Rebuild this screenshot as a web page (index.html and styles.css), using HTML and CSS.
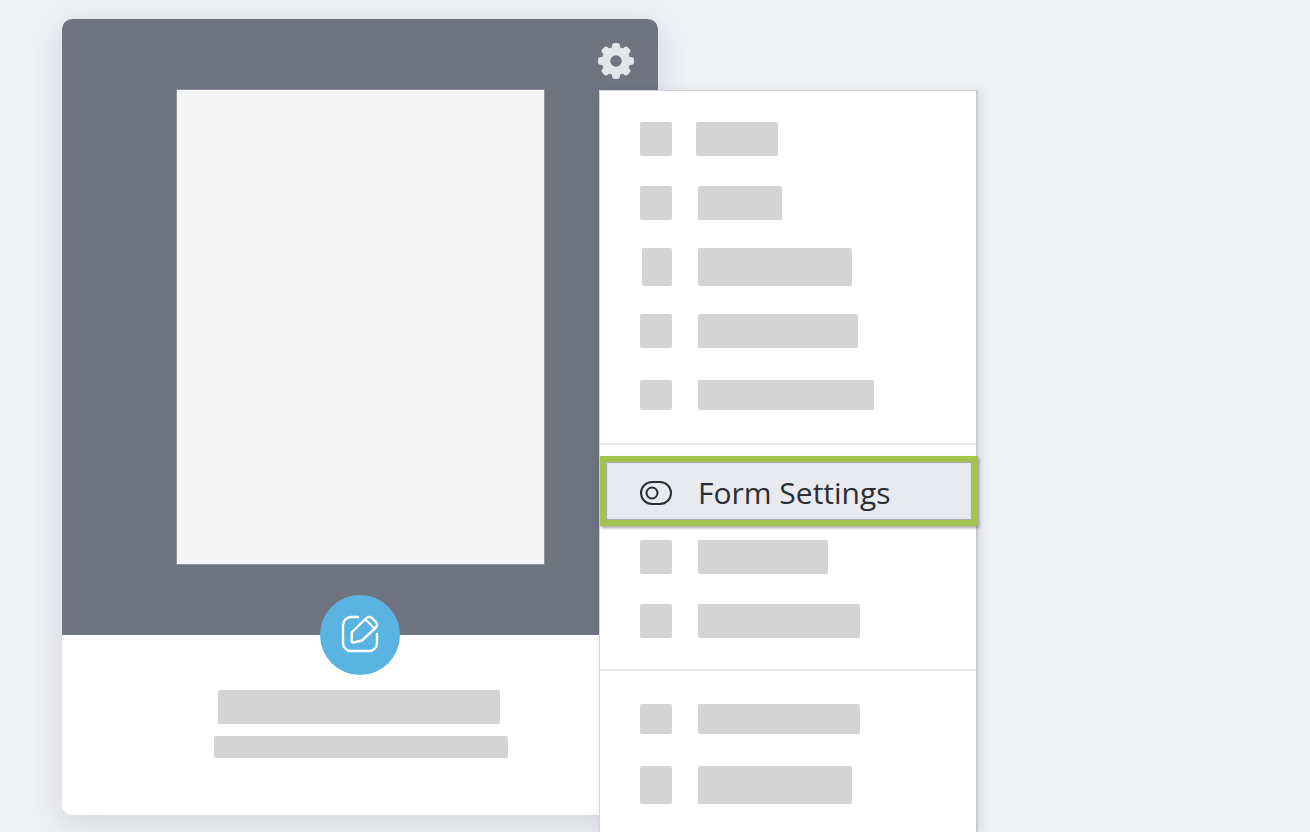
FILE: index.html
```html
<!DOCTYPE html>
<html lang="en">
<head>
  <meta charset="UTF-8" />
  <meta name="viewport" content="width=device-width, initial-scale=1.0"/>
  <title>Form Settings</title>
  <link rel="stylesheet" href="styles.css">
</head>
<body>

  <div class="stage">

    <!-- Form card -->
    <div class="card">
      <div class="card-top">
        <svg class="gear" viewBox="0 0 36 36" aria-hidden="true">
          <g fill="#e4e5e9">
            <rect x="14" y="0" width="8" height="8" rx="3"/>
            <rect x="14" y="0" width="8" height="8" rx="3" transform="rotate(45 18 18)"/>
            <rect x="14" y="0" width="8" height="8" rx="3" transform="rotate(90 18 18)"/>
            <rect x="14" y="0" width="8" height="8" rx="3" transform="rotate(135 18 18)"/>
            <rect x="14" y="0" width="8" height="8" rx="3" transform="rotate(180 18 18)"/>
            <rect x="14" y="0" width="8" height="8" rx="3" transform="rotate(225 18 18)"/>
            <rect x="14" y="0" width="8" height="8" rx="3" transform="rotate(270 18 18)"/>
            <rect x="14" y="0" width="8" height="8" rx="3" transform="rotate(315 18 18)"/>
          </g>
          <circle cx="18" cy="18" r="10" fill="none" stroke="#e4e5e9" stroke-width="8.500"/>
        </svg>
        <div class="sheet"></div>
        <div class="edit-button">
          <svg viewBox="0 0 80 80" width="80" height="80" fill="none" stroke="#fff" stroke-width="2.400" stroke-linecap="round" stroke-linejoin="round" aria-hidden="true">
            <path d="M38 22H31a8 8 0 0 0-8 8v18a8 8 0 0 0 8 8h18a8 8 0 0 0 8-8v-9"/>
            <path d="M32 37 46.500 23a4 4 0 0 1 5.500 0l4 4a4 4 0 0 1 0 5.500L42 45.500 33.500 47.500a1.500 1.500 0 0 1-1.900-1.700Z"/>
            <path d="M45.500 24.500 54.500 33.500"/>
          </svg>
        </div>
      </div>
      <div class="card-bottom">
        <div class="skel card-title"></div>
        <div class="skel card-sub"></div>
      </div>
    </div>

    <!-- Settings menu -->
    <div class="menu">
      <div class="menu-section first">
        <div class="row h34"><div class="skel icon"></div><div class="skel bar tight w82"></div></div>
        <div class="row h34"><div class="skel icon"></div><div class="skel bar w84"></div></div>
        <div class="row h38"><div class="skel icon narrow"></div><div class="skel bar w154"></div></div>
        <div class="row h34"><div class="skel icon"></div><div class="skel bar w160"></div></div>
        <div class="row h30"><div class="skel icon"></div><div class="skel bar w176"></div></div>
      </div>
      <div class="menu-section middle">
        <div class="row active">
          <svg class="toggle" viewBox="0 0 32 24" aria-hidden="true">
            <rect x="1" y="1" width="30" height="22" rx="11" fill="none" stroke="#2b2e35" stroke-width="2"/>
            <circle cx="12" cy="12" r="5.500" fill="none" stroke="#2b2e35" stroke-width="2"/>
          </svg>
          <span class="label">Form Settings</span>
        </div>
        <div class="row h34"><div class="skel icon"></div><div class="skel bar w130"></div></div>
        <div class="row h34"><div class="skel icon"></div><div class="skel bar w162"></div></div>
      </div>
      <div class="menu-section last">
        <div class="row h30"><div class="skel icon"></div><div class="skel bar w162"></div></div>
        <div class="row h38 gap2"><div class="skel icon"></div><div class="skel bar w154"></div></div>
      </div>
    </div>

  </div>

</body>
</html>
```

FILE: styles.css
```css
html, body {
  height: 100%;
  overflow: hidden;
}

body {
  margin: 0;
  background: #eff0f4;
  font-family: 'Open Sans', sans-serif;
  color: #2b2e35;
}

.stage {
  position: relative;
  padding: 19px 0 0 62px;
}

.skel {
  background: #d4d4d4;
  border-radius: 2px;
}

/* Card */
.card {
  width: 596px;
  height: 796px;
  border-radius: 10px;
  background: white;
  box-shadow: 0 8px 30px rgba(70, 80, 100, 0.16);
}

.card-top {
  position: relative;
  height: 616px;
  padding: 71px 0 0 115px;
  box-sizing: border-box;
  background: #6f7480;
  border-radius: 10px 10px 0 0;
}

.gear {
  position: absolute;
  top: 24px;
  right: 24px;
  width: 36px;
  height: 36px;
}

.sheet {
  width: 367px;
  height: 474px;
  background: #f5f5f5;
  box-shadow: 0 0 0 1px #8f939c;
}

.edit-button {
  position: absolute;
  left: 258px;
  bottom: -40px;
  width: 80px;
  height: 80px;
  border-radius: 50%;
  background: #5ab4e2;
}

.edit-button svg {
  display: block;
}

.card-bottom {
  display: flex;
  flex-direction: column;
  padding-top: 55px;
}

.card-title {
  width: 282px;
  height: 34px;
  margin-left: 156px;
}

.card-sub {
  width: 294px;
  height: 22px;
  margin: 12px 0 0 152px;
}

/* Menu */
.menu {
  position: absolute;
  top: 90px;
  left: 599px;
  width: 379px;
  height: 742px;
  box-sizing: border-box;
  background: white;
  border: 1px solid #d3d4d8;
  border-bottom: none;
  border-right-width: 2px;
  border-right-color: #c9cace;
  box-shadow: 2px 2px 10px rgba(60, 65, 80, 0.14);
}

.menu-section {
  border-bottom: 2px solid #e9e9ed;
}

.menu-section.first {
  padding: 16px 0;
}

.menu-section.middle {
  padding: 11px 0 16px;
}

.menu-section.last {
  padding-top: 16px;
  border-bottom: none;
}

.row {
  display: flex;
  align-items: center;
  gap: 26px;
  height: 64px;
  padding-left: 40px;
}

.row.gap2 {
  margin-top: 2px;
}

.row.h30 .skel { height: 30px; }
.row.h34 .skel { height: 34px; }
.row.h38 .skel { height: 38px; }

.icon {
  width: 32px;
}

.icon.narrow {
  width: 30px;
  margin-left: 2px;
}

.bar.tight { margin-left: -2px; }
.w82 { width: 82px; }
.w84 { width: 84px; }
.w130 { width: 130px; }
.w154 { width: 154px; }
.w160 { width: 160px; }
.w162 { width: 162px; }
.w176 { width: 176px; }

.row.active {
  box-sizing: border-box;
  height: 70px;
  margin: 0 -2px -1px 0;
  padding: 3px 0 0 34px;
  background: #e9eaef;
  border: 6px solid #a3c44c;
  box-shadow: inset 0 0 1px 1px rgba(70, 75, 85, 0.42), 1px 2px 3px rgba(0, 0, 0, 0.35);
}

.toggle {
  width: 32px;
  height: 24px;
  flex-shrink: 0;
}

.label {
  font-size: 30px;
  line-height: 1;
}
```
